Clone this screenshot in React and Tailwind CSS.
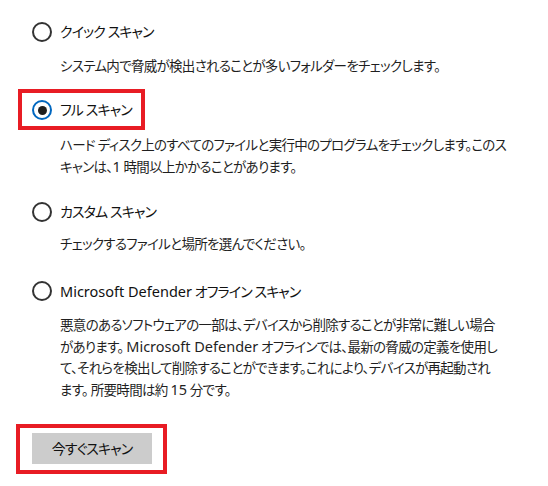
const font = "font-['Noto_Sans','Noto_Sans_CJK_JP',sans-serif] [font-feature-settings:'palt']";

// Latin runs keep their natural width; Japanese is condensed
function L({ children }) {
  return <span className="text-[14.5px] tracking-normal">{children}</span>;
}

function Radio({ checked }) {
  return checked ? (
    <span className="flex h-5 w-5 flex-shrink-0 items-center justify-center rounded-full border-2 border-[#0067c0]">
      <span className="h-[9px] w-[9px] rounded-full bg-[#1f1f1f]" />
    </span>
  ) : (
    <span className="h-5 w-5 flex-shrink-0 rounded-full border-2 border-[#333]" />
  );
}

function Title({ checked, children }) {
  return (
    <div className="flex h-5 items-center gap-2 text-[14px] leading-5 tracking-[-0.9px] text-[#111]">
      <Radio checked={checked} />
      <span className="whitespace-nowrap">{children}</span>
    </div>
  );
}

function Desc({ className = '', children }) {
  return (
    <p className={`pl-7 text-[13.5px] leading-[21px] tracking-[-0.7px] text-[#1f1f1f] whitespace-nowrap ${className}`}>
      {children}
    </p>
  );
}

export default function App() {
  return (
    <div className={`h-[486px] w-[548px] overflow-hidden bg-white pl-8 pt-[22px] ${font}`}>
      {/* Quick scan */}
      <Title>クイック スキャン</Title>
      <Desc className="mt-[14px]">システム内で脅威が検出されることが多いフォルダーをチェックします。</Desc>

      {/* Full scan (highlighted) */}
      <div className="-ml-[14px] mt-3 inline-flex border-4 border-[#e81c24] pb-[6px] pl-[10px] pr-[9px] pt-[7px]">
        <Title checked>フル スキャン</Title>
      </div>
      <Desc className="mt-[5px]">
        ハード ディスク上のすべてのファイルと実行中のプログラムをチェックします。このス
        <br />
        キャンは、<L>1</L> 時間以上かかることがあります。
      </Desc>

      {/* Custom scan */}
      <div className="mt-6">
        <Title>カスタム スキャン</Title>
      </div>
      <Desc className="mt-3">チェックするファイルと場所を選んでください。</Desc>

      {/* Offline scan */}
      <div className="mt-[26px]">
        <Title>
          <span className="text-[14.5px] tracking-normal">Microsoft Defender</span> オフライン&nbsp;スキャン
        </Title>
      </div>
      <Desc className="mt-[14px]">
        悪意のあるソフトウェアの一部は、デバイスから削除することが非常に難しい場合
        <br />
        があります。 <L>Microsoft Defender</L> オフラインでは、最新の脅威の定義を使用し
        <br />
        て、それらを検出して削除することができます。これにより、デバイスが再起動され
        <br />
        ます。 所要時間は約 <L>15</L> 分です。
      </Desc>

      {/* Scan now */}
      <div className="-ml-4 mt-[23px] inline-flex border-4 border-[#e81c24] pb-[6px] pl-3 pr-[11px] pt-[5px]">
        <button className="h-[31px] w-[120px] bg-[#cccccc] text-[14px] tracking-[-0.9px] text-[#111]">今すぐスキャン</button>
      </div>
    </div>
  );
}
